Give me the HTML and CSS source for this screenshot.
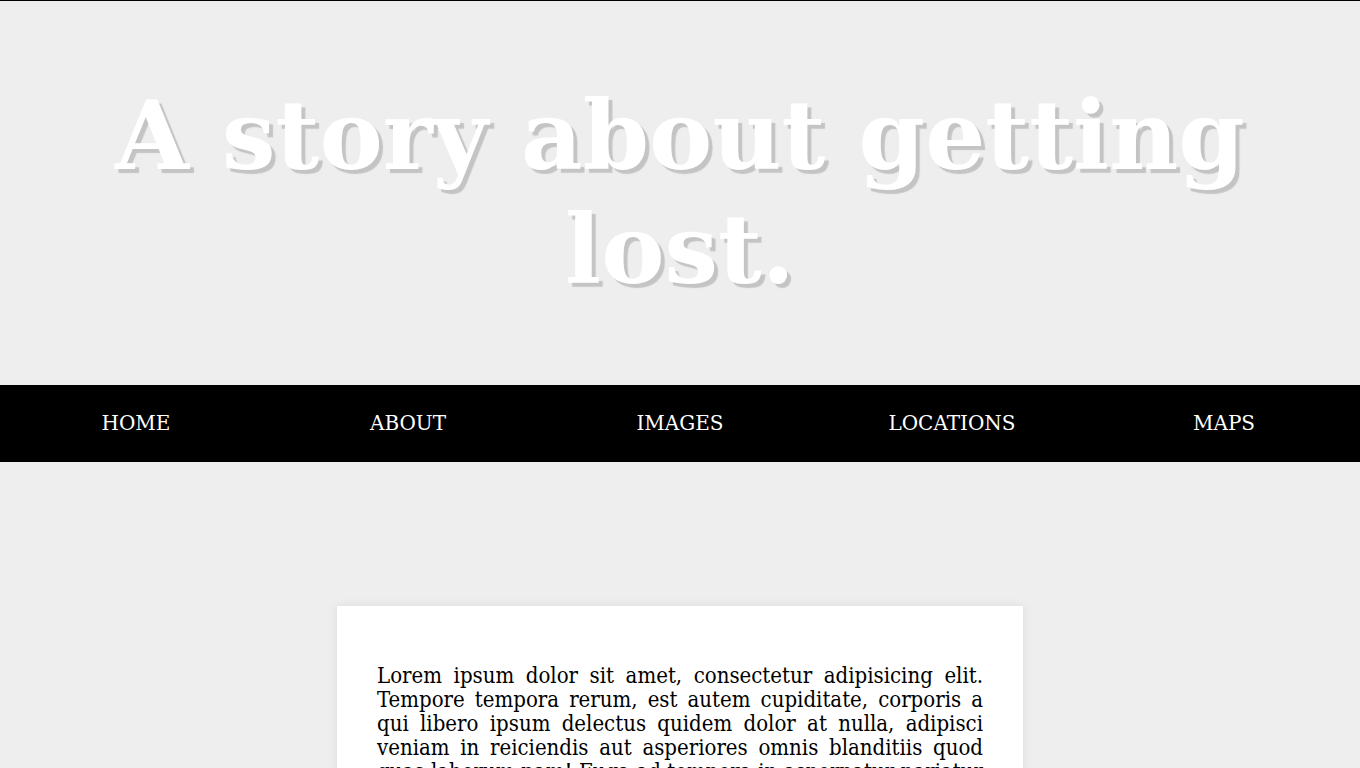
FILE: index.html
```html
<!DOCTYPE html>
<html>
<head>
<meta charset="utf-8">
<link rel="stylesheet" href="styles.css">
</head>
<body>
<header class="hero">
  <h1 class="hero-title">A story about getting lost.</h1>
</header>
<nav class="nav">
  <a class="nav-link" href="#">HOME</a>
  <a class="nav-link" href="#">ABOUT</a>
  <a class="nav-link" href="#">IMAGES</a>
  <a class="nav-link" href="#">LOCATIONS</a>
  <a class="nav-link" href="#">MAPS</a>
</nav>
<main class="main">
  <article class="card">
    <p class="card-text">Lorem ipsum dolor sit amet, consectetur adipisicing elit. Tempore tempora rerum, est autem cupiditate, corporis a qui libero ipsum delectus quidem dolor at nulla, adipisci veniam in reiciendis aut asperiores omnis blanditiis quod quas laborum nam! Fuga ad tempora in aspernatur pariatur fugit quibusdam dolores sunt esse magni, ut, dignissimos.</p>
  </article>
</main>
</body>
</html>
```
FILE: styles.css
```css
html, body {
  margin: 0;
  padding: 0;
}
body {
  background: #eeeeee;
  font-family: "DejaVu Serif", serif;
  border-top: 1px solid #000;
}
.hero {
  height: 384px;
  display: flex;
  align-items: center;
  justify-content: center;
  background: #eeeeee;
}
.hero-title {
  margin: 0;
  width: 1160px;
  text-align: center;
  color: #fff;
  font-size: 95px;
  line-height: 114px;
  font-weight: bold;
  text-shadow: 4px 4px 1px #c4c4c4;
}
.nav {
  display: grid;
  grid-template-columns: repeat(5, 1fr);
  height: 77px;
  align-items: center;
  background: #000;
}
.nav-link {
  text-align: center;
  color: #fff;
  text-decoration: none;
  font-size: 20px;
  padding-bottom: 2px;
}
.main {
  padding-top: 144px;
  display: flex;
  justify-content: center;
}
.card {
  width: 606px;
  padding: 40px 40px;
  background: #fff;
  box-shadow: 0 0 10px rgba(0,0,0,0.08);
}
.card-text {
  margin: 18px 0;
  font-family: "DejaVu Serif Condensed", "DejaVu Serif", serif;
  font-stretch: condensed;
  font-size: 22px;
  line-height: 24px;
  text-align: justify;
}
```
